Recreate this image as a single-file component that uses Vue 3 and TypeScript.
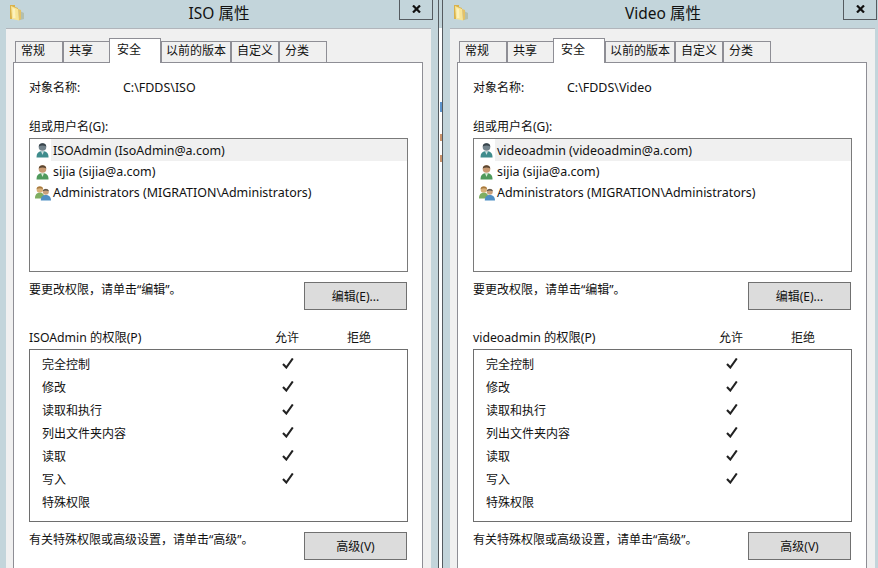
<script setup lang="ts">
interface Member {
  label: string
  icon: 'admin' | 'user' | 'group'
}

interface PropWindow {
  title: string
  path: string
  owner: string
  members: Member[]
}

const tabs = ['常规', '共享', '安全', '以前的版本', '自定义', '分类']

const windows: PropWindow[] = [
  {
    title: 'ISO 属性',
    path: 'C:\\FDDS\\ISO',
    owner: 'ISOAdmin',
    members: [
      { label: 'ISOAdmin (IsoAdmin@a.com)', icon: 'admin' },
      { label: 'sijia (sijia@a.com)', icon: 'user' },
      { label: 'Administrators (MIGRATION\\Administrators)', icon: 'group' },
    ],
  },
  {
    title: 'Video 属性',
    path: 'C:\\FDDS\\Video',
    owner: 'videoadmin',
    members: [
      { label: 'videoadmin (videoadmin@a.com)', icon: 'admin' },
      { label: 'sijia (sijia@a.com)', icon: 'user' },
      { label: 'Administrators (MIGRATION\\Administrators)', icon: 'group' },
    ],
  },
]

const perms = [
  { name: '完全控制', allow: true },
  { name: '修改', allow: true },
  { name: '读取和执行', allow: true },
  { name: '列出文件夹内容', allow: true },
  { name: '读取', allow: true },
  { name: '写入', allow: true },
  { name: '特殊权限', allow: false },
]
</script>

<template>
  <div class="desk">
    <template v-for="(win, i) in windows" :key="win.title">
      <div v-if="i > 0" class="gap">
        <i class="scrap s1"></i>
        <i class="scrap s2"></i>
        <i class="scrap s3"></i>
      </div>
      <section class="win">
        <header class="titlebar">
          <svg class="folder" width="15" height="16" viewBox="0 0 15 16">
            <path d="M11 6 15 8V14L11 15Z" fill="#b3bfae" />
            <path d="M1 0 6 0 6 2 9 3V14L1 14Z" fill="#d9b24c" />
            <path d="M2 1 9 4 10 15.500 3 14Z" fill="#f8e596" />
            <path d="M9 4 12 5V14L10 15.500Z" fill="#e4c266" />
            <path d="M3.500 3 6 4 6.500 13 4 13Z" fill="#fcf1bc" />
          </svg>
          <h1 class="title">{{ win.title }}</h1>
          <button class="close">
            <svg width="9" height="8" viewBox="0 0 9 8">
              <path d="M1 .5 8 7.500M8 .5 1 7.500" stroke="#111" stroke-width="2.200" fill="none" />
            </svg>
          </button>
        </header>

        <div class="panel">
          <nav class="tabs">
            <span v-for="t in tabs" :key="t" class="tab" :class="{ active: t === '安全' }">{{ t }}</span>
          </nav>

          <div class="body">
            <div class="object-row">
              <span class="object-label">对象名称:</span>
              <span class="latin">{{ win.path }}</span>
            </div>

            <div class="caption">组或用户名(G):</div>
            <ul class="members">
              <li v-for="(m, n) in win.members" :key="m.label" class="member" :class="{ first: n === 0 }">
                <svg class="member-icon" width="16" height="16" viewBox="0 0 16 16">
                  <template v-if="m.icon === 'admin'">
                    <path d="M1.500 15.500C1.500 11 3.500 9.300 7.500 9.300S13.500 11 13.500 15.500Z" fill="#3f8c8c" />
                    <path d="M6 9.300 7.500 13 9 9.300Z" fill="#cfe0e0" />
                    <circle cx="7.500" cy="5" r="3.800" fill="#72838c" />
                    <path d="M3.700 4.500C4 .2 11 .2 11.300 4.500 9 3.300 6 3.300 3.700 4.500Z" fill="#39454c" />
                  </template>
                  <template v-else-if="m.icon === 'user'">
                    <path d="M1.500 15.500C1.500 11 3.500 9.300 7.500 9.300S13.500 11 13.500 15.500Z" fill="#4f9a5c" />
                    <path d="M6 9.300 7.500 13 9 9.300Z" fill="#dcecd8" />
                    <circle cx="7.500" cy="5" r="3.800" fill="#c99a72" />
                    <path d="M3.700 4.500C4 .2 11 .2 11.300 4.500 9 3.300 6 3.300 3.700 4.500Z" fill="#5a4632" />
                  </template>
                  <template v-else>
                    <circle cx="4.800" cy="4.500" r="3.200" fill="#d9b078" />
                    <path d="M1.600 4C2 .8 7.600 .8 8 4 6 3 4 3 1.600 4Z" fill="#a5793f" />
                    <path d="M0 13.500C0 9.500 1.800 7.800 4.800 7.800S9.500 9.500 9.500 13.500Z" fill="#7fae62" />
                    <circle cx="10.800" cy="6.800" r="3" fill="#c9a17c" />
                    <path d="M7.800 6.300C8 3.200 13.600 3.200 13.800 6.300 12 5.300 9.500 5.300 7.800 6.300Z" fill="#54504a" />
                    <path d="M5.800 15.500C5.800 11.500 8 9.900 10.800 9.900S16 11.500 16 15.500Z" fill="#4f8fc4" />
                  </template>
                </svg>
                <span class="member-name latin">{{ m.label }}</span>
              </li>
            </ul>

            <div class="action-row">
              <span class="hint">要更改权限，请单击“编辑”。</span>
              <button class="btn">编辑(E)...</button>
            </div>

            <div class="perm-head">
              <span class="owner">{{ win.owner }} 的权限(P)</span>
              <span class="col">允许</span>
              <span class="col">拒绝</span>
            </div>
            <div class="perms">
              <div v-for="p in perms" :key="p.name" class="perm">
                <span>{{ p.name }}</span>
                <span class="col">
                  <svg v-if="p.allow" class="check" width="12" height="11" viewBox="0 0 12 11">
                    <path d="M1 6 4.300 9.500 10.800 .5" stroke="#222" stroke-width="2.100" fill="none" />
                  </svg>
                </span>
                <span class="col"></span>
              </div>
            </div>

            <div class="action-row">
              <span class="hint">有关特殊权限或高级设置，请单击“高级”。</span>
              <button class="btn">高级(V)</button>
            </div>
          </div>
        </div>
      </section>
    </template>
  </div>
</template>

<style scoped>
.desk {
  display: flex;
  width: 878px;
  height: 568px;
  overflow: hidden;
  background: #c3d5db;
  color: #111;
  font-family: "Noto Sans", "Noto Sans CJK SC", sans-serif;
  font-size: 12px;
}

.latin {
  font-size: 12.450px;
}

.owner {
  font-size: 12.250px;
}

.gap {
  position: relative;
  flex: none;
  box-sizing: border-box;
  width: 5px;
  margin-right: 1px;
  border-left: 1px solid #555b60;
  border-right: 1px solid #555b60;
  background: linear-gradient(#c3d5db 28px, #fff 28px);
}

.scrap {
  position: absolute;
  left: 1px;
  width: 2px;
}

.s1 {
  top: 102px;
  height: 10px;
  background: #5b93cc;
}

.s2 {
  top: 134px;
  height: 7px;
  background: #c9926a;
}

.s3 {
  top: 155px;
  height: 7px;
  background: #c9926a;
}

.win {
  flex: none;
  display: flex;
  flex-direction: column;
  width: 438px;
}

.titlebar {
  display: flex;
  flex: none;
  position: relative;
  justify-content: center;
  height: 28px;
}

.folder {
  position: absolute;
  left: 9px;
  top: 5px;
}

.title {
  margin: 0;
  font-size: 15.500px;
  font-weight: 400;
  line-height: 27px;
}

.close {
  position: absolute;
  left: 399px;
  top: -1px;
  display: flex;
  align-items: center;
  justify-content: center;
  box-sizing: border-box;
  width: 34px;
  height: 21px;
  padding: 0 0 2px;
  border: 1px solid #555b60;
  background: transparent;
}

.panel {
  flex: 1;
  margin: 0 7px 0 6px;
  border-top: 1px solid #b1b5bb;
  background: #f0f0f0;
}

.tabs {
  display: flex;
  align-items: flex-end;
  height: 33px;
  padding-left: 9px;
}

.tab {
  box-sizing: border-box;
  width: 48px;
  height: 22px;
  margin-bottom: -1px;
  padding-left: 5px;
  border: 1px solid #8e8e95;
  border-bottom: none;
  line-height: 18px;
}

.tab:nth-child(2) {
  width: 47px;
}

.tab:nth-child(4) {
  width: 70px;
  padding-left: 4px;
}

.tab.active {
  position: relative;
  z-index: 1;
  width: 52px;
  height: 25px;
  margin-left: -1px;
  padding-left: 7px;
  line-height: 22px;
  background: #fff;
}

.body {
  box-sizing: border-box;
  height: 520px;
  margin: 0 8px 0 7px;
  padding: 15px 14px 0 15px;
  border: 1px solid #8e8e95;
  background: #fff;
}

.object-row {
  display: flex;
  height: 18px;
  line-height: 20px;
}

.object-label {
  width: 94px;
}

.caption {
  height: 18px;
  margin-top: 21px;
  line-height: 20px;
}

.members {
  box-sizing: border-box;
  height: 134px;
  margin: 3px 0 0;
  padding: 0;
  border: 1px solid #7a7a7a;
  list-style: none;
}

.member {
  display: flex;
  align-items: center;
  height: 21px;
  padding-left: 5px;
}

.member.first {
  height: 22px;
}

.member.first .member-name {
  background: #f0f0f0;
  line-height: 24px;
}

.member-icon {
  flex: none;
  width: 16px;
}

.member-name {
  flex: 1;
  height: 22px;
  padding-left: 2px;
  line-height: 22px;
}

.action-row {
  display: flex;
  justify-content: space-between;
  margin-top: 10px;
}

.hint {
  line-height: 16px;
}

.btn {
  box-sizing: border-box;
  width: 103px;
  height: 28px;
  margin-right: 1px;
  padding: 0;
  border: 1px solid #707070;
  background: #dcdcdc;
  color: #111;
  font: inherit;
}

.perm-head {
  display: grid;
  grid-template-columns: 1fr 72px 72px;
  height: 18px;
  margin-top: 18px;
  padding-right: 13px;
  line-height: 20px;
}

.col {
  display: flex;
  justify-content: center;
  align-items: center;
}

.check {
  margin-bottom: 2px;
}

.perms {
  box-sizing: border-box;
  height: 173px;
  margin-top: 3px;
  padding: 3px 11px 0 12px;
  border: 1px solid #6e6e6e;
}

.perm {
  display: grid;
  grid-template-columns: 1fr 72px 72px;
  height: 23px;
  line-height: 23px;
}
</style>

<style>
body {
  margin: 0;
}
</style>
